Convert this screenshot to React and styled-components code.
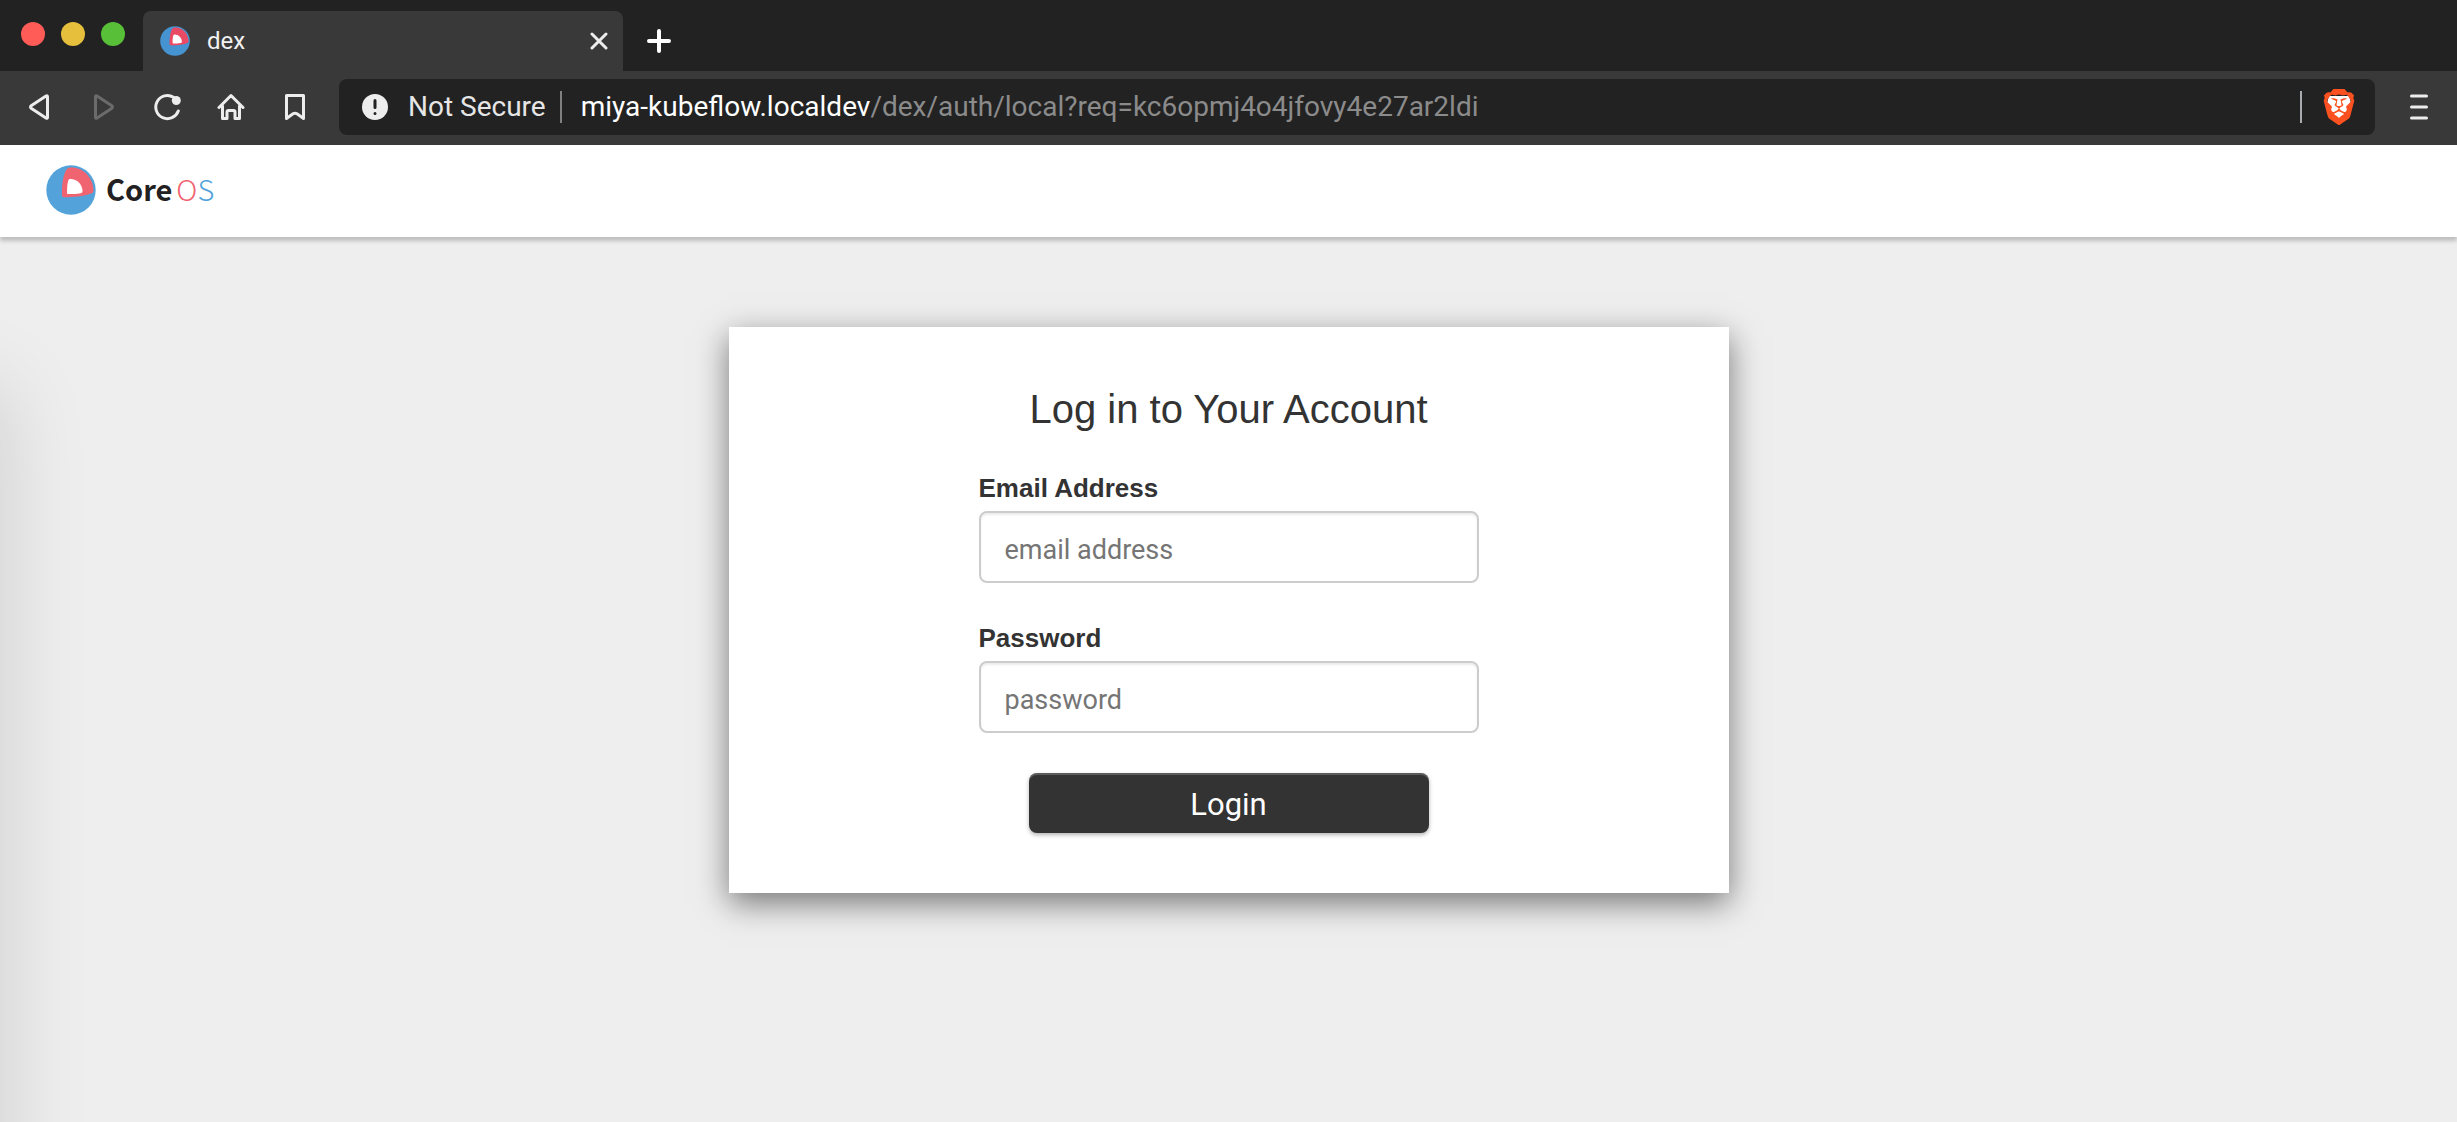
import React from 'react';

// Libraries
import styled, { createGlobalStyle } from 'styled-components';
import { SiBrave } from 'react-icons/si';

const GlobalStyle = createGlobalStyle`
  * {
    box-sizing: border-box;
  }

  html,
  body,
  #root {
    height: 100%;
    margin: 0;
  }
`;

const uiFont = `Roboto, 'Liberation Sans', sans-serif`;
const pageFont = `'Liberation Sans', Arial, sans-serif`;

const Window = styled.div`
  display: flex;
  flex-direction: column;
  min-height: 100%;
  background-color: #eeeeee;
`;

const TabStrip = styled.div`
  display: flex;
  align-items: flex-end;
  height: 71px;
  background-color: #222222;
  font-family: ${uiFont};
`;

const WindowControls = styled.div`
  display: flex;
  align-self: flex-start;
  gap: 16px;
  padding: 22px 18px 0 21px;
`;

const Control = styled.button`
  width: 24px;
  height: 24px;
  padding: 0;
  border: none;
  border-radius: 50%;
  background-color: ${({ $color }) => $color};
`;

const Tab = styled.div`
  display: flex;
  align-items: center;
  width: 480px;
  height: 60px;
  padding: 0 11px 0 17px;
  border-radius: 8px 8px 0 0;
  background-color: #393939;
  color: #f1f1f1;
`;

const TabTitle = styled.span`
  flex: 1;
  margin-left: 17px;
  font-size: 24px;
  line-height: 30px;
`;

const IconButton = styled.button`
  display: flex;
  align-items: center;
  justify-content: center;
  flex: none;
  width: ${({ $width }) => $width || 64}px;
  height: ${({ $height }) => $height || 56}px;
  padding: 0;
  border: none;
  background-color: transparent;
  color: ${({ disabled }) => (disabled ? '#6b6b6b' : '#ededed')};
`;

const Toolbar = styled.div`
  display: flex;
  align-items: center;
  height: 74px;
  padding: 0 6px 2px 7px;
  background-color: #393939;
  font-family: ${uiFont};
`;

const AddressBar = styled.div`
  display: flex;
  align-items: center;
  flex: 1;
  height: 56px;
  margin: 0 12px;
  padding: 0 18px 0 23px;
  border-radius: 8px;
  background-color: #222222;
  font-size: 28px;
  line-height: 32px;
`;

const Security = styled.span`
  margin-left: 20px;
  color: #e6e6e6;
`;

const Divider = styled.span`
  width: 2px;
  height: 32px;
  margin: 0 19px 0 14px;
  background-color: ${({ $color }) => $color};
`;

const Url = styled.span`
  flex: 1;
  color: #8b8b8b;
`;

const Host = styled.span`
  color: #ffffff;
`;

const Navbar = styled.header`
  position: relative;
  display: flex;
  align-items: center;
  height: 92px;
  padding: 0 46px 2px;
  background-color: #ffffff;
  box-shadow: 0 4px 4px rgba(0, 0, 0, 0.2);
`;

const Brand = styled.div`
  display: flex;
  gap: 4px;
  margin-left: 10px;
  padding-bottom: 4px;
  font-family: 'Noto Sans CJK JP', 'Noto Sans', sans-serif;
  font-size: 29px;
  line-height: 40px;
  font-weight: 700;
  color: #222021;
`;

const BrandLetter = styled.span`
  font-weight: 300;
  color: ${({ $color }) => $color};
`;

const Content = styled.main`
  position: relative;
  flex: 1;
  display: flex;
  justify-content: center;
  align-items: flex-start;
  padding: 90px 20px;
  overflow: hidden;
`;

// shadow thrown on the page from beyond its left edge
const EdgeShade = styled.div`
  position: absolute;
  top: 150px;
  bottom: -160px;
  left: -400px;
  width: 400px;
  box-shadow: 5px 0 80px rgba(0, 0, 0, 0.13);
`;

const Panel = styled.form`
  position: relative;
  display: flex;
  flex-direction: column;
  align-items: center;
  gap: 40px;
  width: 100%;
  max-width: 1000px;
  padding: 60px 20px;
  background-color: #ffffff;
  box-shadow: 0 10px 30px rgba(0, 0, 0, 0.5);
  font-family: ${pageFont};
  color: #333333;
`;

const Heading = styled.h2`
  margin: 0 0 2px;
  font-size: 40px;
  line-height: 44px;
  font-weight: 400;
`;

const Field = styled.div`
  display: flex;
  flex-direction: column;
  gap: 8px;
  width: 100%;
  max-width: 500px;
`;

const Label = styled.label`
  font-size: 26px;
  line-height: 30px;
  font-weight: 700;
`;

const Input = styled.input`
  width: 100%;
  height: 72px;
  padding: 6px 24px 0;
  border: 2px solid #cccccc;
  border-radius: 8px;
  background-color: #ffffff;
  box-shadow: inset 0 2px 2px rgba(0, 0, 0, 0.075);
  color: #666666;
  font-family: ${uiFont};
  font-size: 27px;

  &::placeholder {
    color: #757575;
  }
`;

const Submit = styled.button`
  width: 100%;
  max-width: 400px;
  height: 60px;
  padding: 2px 0 0;
  border: none;
  border-radius: 8px;
  background-color: #333333;
  box-shadow: inset 0 2px 0 rgba(255, 255, 255, 0.2),
    0 2px 4px rgba(0, 0, 0, 0.3);
  color: #ffffff;
  font-family: ${uiFont};
  font-size: 31px;
`;

const Logo = ({ size, blue, red }) => (
  <svg width={size} height={size} viewBox='0 0 50 50' aria-hidden='true'>
    <circle cx='25' cy='25' r='24.7' fill={blue} />
    <path
      d='M25.5 2.5C37.5 2.5 47.5 13 47.5 25.5C47.5 27.5 46.5 28 45 28.6C38 31.5 27 32.3 18.5 32.3C17 32.3 16 31.8 16 30C15.8 20 17 10 20.5 4.5C21.7 2.8 23.5 2.5 25.5 2.5Z'
      fill={red}
    />
    <path
      d='M24.5 14C31 14 36.5 19.5 36.5 26C36.5 27.5 36 28 34.5 28.2C30.5 28.9 26 29 22 29C21.2 29 21 28.5 21 27.5C21 23 21.3 18.5 22.3 15.5C22.7 14.3 23.3 14 24.5 14Z'
      fill='#ffffff'
    />
  </svg>
);

const Icon = ({ children, size = 28, stroke = 3 }) => (
  <svg
    width={size}
    height={size}
    viewBox={`0 0 ${size} ${size}`}
    fill='none'
    stroke='currentColor'
    strokeWidth={stroke}
    strokeLinecap='round'
    strokeLinejoin='round'
    aria-hidden='true'
  >
    {children}
  </svg>
);

const BraveIcon = () => (
  <svg width='36' height='36' viewBox='0 0 36 36' aria-hidden='true'>
    <path d='M8 7H28L30 14L26 26L18 31L10 26L6 14Z' fill='#ffffff' />
    <SiBrave size={36} color='#fb501f' />
  </svg>
);

const App = () => (
  <Window>
    <GlobalStyle />

    <TabStrip>
      <WindowControls>
        <Control $color='#ff5c57' aria-label='Close window' />
        <Control $color='#e6bf3c' aria-label='Minimize window' />
        <Control $color='#58c038' aria-label='Zoom window' />
      </WindowControls>
      <Tab>
        <Logo size={30} blue='#4693d1' red='#ea4a63' />
        <TabTitle>dex</TabTitle>
        <IconButton $width={26} $height={26} aria-label='Close tab'>
          <Icon size={18}>
            <path d='M2 2L16 16M16 2L2 16' />
          </Icon>
        </IconButton>
      </Tab>
      <IconButton $width={72} $height={60} aria-label='New tab'>
        <Icon size={24} stroke={4}>
          <path d='M12 2V22M2 12H22' stroke='#ffffff' />
        </Icon>
      </IconButton>
    </TabStrip>

    <Toolbar>
      <IconButton aria-label='Back'>
        <Icon>
          <path d='M22.5 3.8V24.2Q22.5 26 21 25L6.5 15.5Q4.5 14 6.5 12.5L21 3Q22.5 2 22.5 3.8Z' />
        </Icon>
      </IconButton>
      <IconButton disabled aria-label='Forward'>
        <Icon>
          <path d='M6.5 3.8V24.2Q6.5 26 8 25L22.5 15.5Q24.5 14 22.5 12.5L8 3Q6.5 2 6.5 3.8Z' />
        </Icon>
      </IconButton>
      <IconButton aria-label='Reload'>
        <Icon>
          <path d='M20.5 4.2A11.6 11.6 0 1 0 25.3 18' />
          <circle cx='23.3' cy='7.5' r='4.5' fill='currentColor' stroke='none' />
        </Icon>
      </IconButton>
      <IconButton aria-label='Home'>
        <Icon>
          <path d='M2 14.5L14 2.5L26 14.5M5.5 13V25.5H10V19Q10 17.5 11.5 17.5H16.5Q18 17.5 18 19V25.5H22.5V13' />
        </Icon>
      </IconButton>
      <IconButton aria-label='Bookmark'>
        <Icon>
          <path d='M5.5 2.5H22.5V25.5L16 20.8Q14 19.6 12 20.8L5.5 25.5Z' />
        </Icon>
      </IconButton>

      <AddressBar>
        <Icon size={26}>
          <circle cx='13' cy='13' r='13' fill='#ededed' stroke='none' />
          <path d='M13 6.5V13.5M13 19.5V19.6' stroke='#222222' />
        </Icon>
        <Security>Not Secure</Security>
        <Divider $color='#808080' />
        <Url>
          <Host>miya-kubeflow.localdev</Host>
          /dex/auth/local?req=kc6opmj4o4jfovy4e27ar2ldi
        </Url>
        <Divider $color='#a8abb0' />
        <BraveIcon />
      </AddressBar>

      <IconButton aria-label='Menu'>
        <Icon size={28}>
          <path d='M6.5 3H21.5M6.5 14H21.5M6.5 25H21.5' />
        </Icon>
      </IconButton>
    </Toolbar>

    <Navbar>
      <Logo size={50} blue='#53a3da' red='#f06371' />
      <Brand>
        <span>Core</span>
        <span>
          <BrandLetter $color='#f06371'>O</BrandLetter>
          <BrandLetter $color='#53a3da'>S</BrandLetter>
        </span>
      </Brand>
    </Navbar>

    <Content>
      <EdgeShade />
      <Panel onSubmit={(e) => e.preventDefault()}>
        <Heading>Log in to Your Account</Heading>
        <Field>
          <Label htmlFor='login'>Email Address</Label>
          <Input id='login' type='text' placeholder='email address' />
        </Field>
        <Field>
          <Label htmlFor='password'>Password</Label>
          <Input id='password' type='password' placeholder='password' />
        </Field>
        <Submit type='submit'>Login</Submit>
      </Panel>
    </Content>
  </Window>
);

export default App;
